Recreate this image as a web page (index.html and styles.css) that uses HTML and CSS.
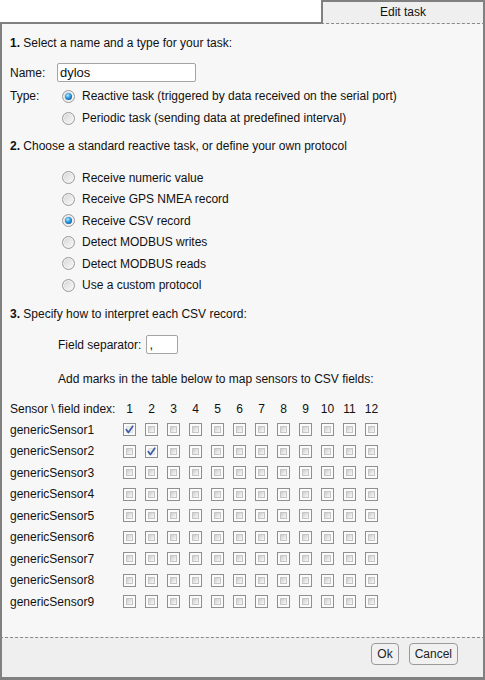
FILE: index.html
```html
<!DOCTYPE html>
<html>
<head>
<meta charset="utf-8">
<link rel="stylesheet" href="styles.css">
</head>
<body>
<div class="window">
  <div class="tabrow">
    <div class="filler"></div>
    <div class="tab">Edit task</div>
  </div>
  <div class="panel">
    <div class="heading h1"><b>1.</b> Select a name and a type for your task:</div>
    <div class="namerow"><span class="lbl">Name:</span><input class="text name" type="text" value="dylos"></div>
    <div class="typerow">
      <span class="lbl">Type:</span>
      <div class="options">
        <div class="opt"><span class="radio on"></span><span>Reactive task (triggered by data received on the serial port)</span></div>
        <div class="opt"><span class="radio"></span><span>Periodic task (sending data at predefined interval)</span></div>
      </div>
    </div>
    <div class="heading h2"><b>2.</b> Choose a standard reactive task, or define your own protocol</div>
    <div class="protolist">
      <div class="opt"><span class="radio"></span><span>Receive numeric value</span></div>
      <div class="opt"><span class="radio"></span><span>Receive GPS NMEA record</span></div>
      <div class="opt"><span class="radio on"></span><span>Receive CSV record</span></div>
      <div class="opt"><span class="radio"></span><span>Detect MODBUS writes</span></div>
      <div class="opt"><span class="radio"></span><span>Detect MODBUS reads</span></div>
      <div class="opt"><span class="radio"></span><span>Use a custom protocol</span></div>
    </div>
    <div class="heading h3"><b>3.</b> Specify how to interpret each CSV record:</div>
    <div class="seprow"><span>Field separator:</span><input class="text sep" type="text" value=","></div>
    <div class="hint">Add marks in the table below to map sensors to CSV fields:</div>
    <div class="grid" id="grid">
      <div class="hdr first">Sensor \ field index:</div>
      <div class="hdr">1</div><div class="hdr">2</div><div class="hdr">3</div><div class="hdr">4</div><div class="hdr">5</div><div class="hdr">6</div><div class="hdr">7</div><div class="hdr">8</div><div class="hdr">9</div><div class="hdr">10</div><div class="hdr">11</div><div class="hdr">12</div>
    </div>
  </div>
  <div class="footer">
    <button class="btn">Ok</button>
    <button class="btn">Cancel</button>
  </div>
</div>
<script src="script.js"></script>
</body>
</html>
```
FILE: script.js
```js
(function () {
  var grid = document.getElementById('grid');
  var checked = { '1-1': true, '2-2': true };
  var svg = '<svg width="13" height="13" viewBox="0 0 13 13"><path d="M3.2 6.6 L5.4 9.6 L9.8 3.2" fill="none" stroke="#3d5fa8" stroke-width="1.7" stroke-linecap="round" stroke-linejoin="round"/></svg>';
  for (var r = 1; r <= 9; r++) {
    var name = document.createElement('div');
    name.className = 'cell first';
    name.textContent = 'genericSensor' + r;
    grid.appendChild(name);
    for (var c = 1; c <= 12; c++) {
      var cell = document.createElement('div');
      cell.className = 'cell';
      var cb = document.createElement('span');
      if (checked[r + '-' + c]) {
        cb.className = 'cb on';
        cb.innerHTML = svg;
      } else {
        cb.className = 'cb';
      }
      cell.appendChild(cb);
      grid.appendChild(cell);
    }
  }
})();
```
FILE: styles.css
```css
html, body {
  margin: 0;
  padding: 0;
  background: #ffffff;
}
body {
  font-family: "Liberation Sans", Arial, sans-serif;
  font-size: 12px;
  color: #111;
}
.window {
  width: 485px;
  height: 680px;
  display: flex;
  flex-direction: column;
}
.tabrow {
  display: flex;
  height: 24px;
}
.filler {
  flex: 1;
  border-bottom: 2px solid #808080;
}
.tab {
  width: 164px;
  box-sizing: border-box;
  border: 2px solid #808080;
  border-bottom: 1px dashed #8a8a8a;
  background: #efefef;
  text-align: center;
  line-height: 20px;
  height: 24px;
}
.panel {
  flex: 1;
  background: #f7f7f7;
  border-left: 2px solid #808080;
  border-right: 2px solid #808080;
  padding: 12px 0 0 8px;
  display: flex;
  flex-direction: column;
}
.heading {
  line-height: 14px;
  height: 14px;
}
.namerow {
  display: flex;
  align-items: center;
  margin-top: 13px;
  height: 19px;
}
.lbl {
  width: 47px;
}
.text {
  font-family: "Liberation Sans", Arial, sans-serif;
  font-size: 13px;
  color: #111;
  box-sizing: border-box;
  height: 19px;
  border: 1px solid #a4a4a4;
  border-radius: 2px;
  background: #ffffff;
  padding: 0 2px;
  margin: 0;
  outline: none;
}
.name {
  width: 139px;
}
.typerow {
  display: flex;
  margin-top: 3px;
}
.typerow .lbl {
  line-height: 22px;
}
.options {
  padding-left: 5px;
}
.opt {
  display: flex;
  align-items: center;
  gap: 7px;
  height: 21.5px;
}
.typerow .opt {
  height: 22px;
}
.radio {
  width: 13px;
  height: 13px;
  box-sizing: border-box;
  border-radius: 50%;
  border: 1px solid #9a9a9a;
  background: linear-gradient(135deg, #d2d2d2 0%, #e8e8e8 50%, #fbfbfb 100%);
  box-shadow: inset 0 0 0 1px #f2f2f2;
  display: flex;
  align-items: center;
  justify-content: center;
  flex: none;
}
.radio.on::after {
  content: "";
  width: 7px;
  height: 7px;
  border-radius: 50%;
  background: radial-gradient(circle at 40% 35%, #bff0ff 0%, #3aa6e8 35%, #1766b0 70%, #0b3f78 100%);
}
.h2 {
  margin-top: 10px;
}
.protolist {
  margin-top: 14px;
  padding-left: 52px;
}
.h3 {
  margin-top: 11px;
}
.seprow {
  display: flex;
  align-items: center;
  gap: 5px;
  margin-top: 14px;
  padding-left: 48px;
  height: 19px;
}
.sep {
  width: 32px;
}
.hint {
  margin-top: 18px;
  padding-left: 48px;
  line-height: 14px;
}
.grid {
  margin-top: 13px;
  display: grid;
  grid-template-columns: 108.5px repeat(12, 22px);
  grid-template-rows: 20px repeat(9, 21.5px);
}
.hdr, .cell {
  display: flex;
  align-items: center;
  justify-content: center;
}
.hdr.first, .cell.first {
  justify-content: flex-start;
}
.cb {
  width: 13px;
  height: 13px;
  box-sizing: border-box;
  border: 1px solid #8f8f8f;
  background: #fbfbfb;
  padding: 2px;
  display: block;
  position: relative;
}
.cb::before {
  content: "";
  display: block;
  width: 7px;
  height: 7px;
  box-sizing: border-box;
  border: 1px solid #c6c6c6;
  background: linear-gradient(135deg, #cdcdcd 0%, #e6e6e6 55%, #f8f8f8 100%);
}
.cb.on::before {
  border-color: #e2e2e2;
  background: linear-gradient(135deg, #e6e6e6 0%, #f6f6f6 100%);
}
.cb svg {
  position: absolute;
  left: -1px;
  top: -1px;
}
.footer {
  box-sizing: border-box;
  background: #efefef;
  border-top: 1px dashed #8a8a8a;
  border-left: 2px solid #808080;
  border-right: 2px solid #808080;
  border-bottom: 3px solid #808080;
  display: flex;
  justify-content: flex-end;
  align-items: flex-start;
  gap: 10px;
  padding: 5px 25px 0 0;
  height: 43px;
}
.btn {
  font-family: "Liberation Sans", Arial, sans-serif;
  font-size: 12px;
  color: #222;
  height: 22px;
  box-sizing: border-box;
  padding: 0 5px;
  margin: 0;
  border: 1px solid #9a9a9a;
  border-radius: 4px;
  background: #f1f1f1;
}
```
